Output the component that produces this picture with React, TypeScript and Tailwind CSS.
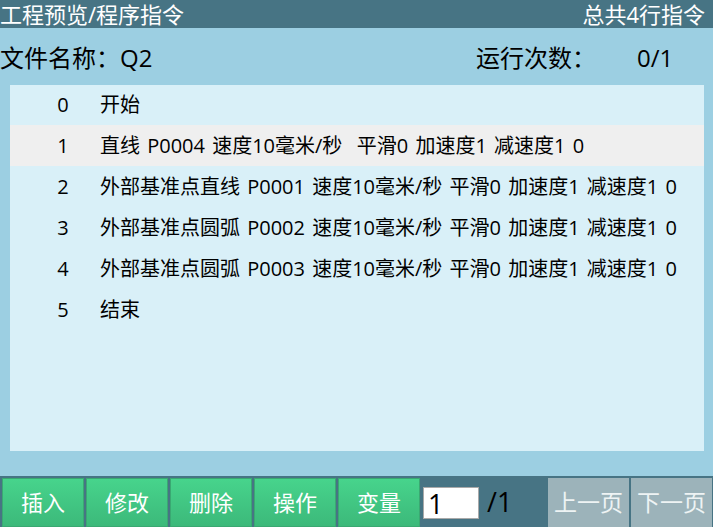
const rows = [
  { no: 0, text: "开始" },
  { no: 1, text: "直线 P0004 速度10毫米/秒  平滑0 加速度1 减速度1 0", active: true },
  { no: 2, text: "外部基准点直线 P0001 速度10毫米/秒 平滑0 加速度1 减速度1 0" },
  { no: 3, text: "外部基准点圆弧 P0002 速度10毫米/秒 平滑0 加速度1 减速度1 0" },
  { no: 4, text: "外部基准点圆弧 P0003 速度10毫米/秒 平滑0 加速度1 减速度1 0" },
  { no: 5, text: "结束" },
];

const actions = ["插入", "修改", "删除", "操作", "变量"];

const font = { fontFamily: '"Open Sans", "Noto Sans CJK SC", sans-serif' };

export default function App() {
  return (
    <div
      className="flex h-[527px] w-[713px] flex-col overflow-hidden bg-[#9ccfe2] text-black"
      style={font}
    >
      {/* title bar */}
      <div className="flex h-[28px] items-center justify-between bg-[#477484] text-[22px] leading-[28px] text-white">
        <span>工程预览/程序指令</span>
        <span className="pr-[8px]">总共4行指令</span>
      </div>

      {/* file info */}
      <div className="flex h-[57px] items-center pt-[2px] text-[24px] leading-none">
        <div className="flex w-[476px]">
          <span>文件名称：</span>
          <span>Q2</span>
        </div>
        <span className="w-[161px]">运行次数：</span>
        <span>0/1</span>
      </div>

      {/* program list */}
      <div className="ml-[10px] mr-[9px] h-[366px] bg-[#d9f0f8] text-[20px]">
        {rows.map((r) => (
          <div
            key={r.no}
            className={`grid grid-cols-[90px_1fr] items-center whitespace-pre [word-spacing:2px] ${
              r.no === 0 ? "h-[40px]" : "h-[41px]"
            } ${r.active ? "bg-[#efefef]" : ""}`}
          >
            <span className="pl-[16px] text-center">{r.no}</span>
            <span>{r.text}</span>
          </div>
        ))}
      </div>

      <div className="h-[25px]" />

      {/* toolbar */}
      <div className="flex h-[51px] gap-[2px] bg-[#477484] pl-[2px] pr-[1px] pt-[2px]">
        {actions.map((a) => (
          <button
            key={a}
            className="h-[49px] w-[82px] border border-[#3aa872] bg-gradient-to-b from-[#47d48c] to-[#3cb97a] text-[22px] text-white"
          >
            {a}
          </button>
        ))}
        <div className="ml-[1px] mt-[9px] flex h-[32px] w-[56px] items-center border border-[#a9a9a9] bg-white pl-[4px] text-[27px] leading-none">
          1
        </div>
        <span className="ml-[6px] mt-[7px] text-[27px] leading-[34px]">/1</span>
        <div className="ml-auto flex gap-[2px]">
          {["上一页", "下一页"].map((p) => (
            <button
              key={p}
              className="h-[49px] w-[81px] bg-[#9cb3ba] text-[23px] text-[#eef3f4]"
            >
              {p}
            </button>
          ))}
        </div>
      </div>
    </div>
  );
}
